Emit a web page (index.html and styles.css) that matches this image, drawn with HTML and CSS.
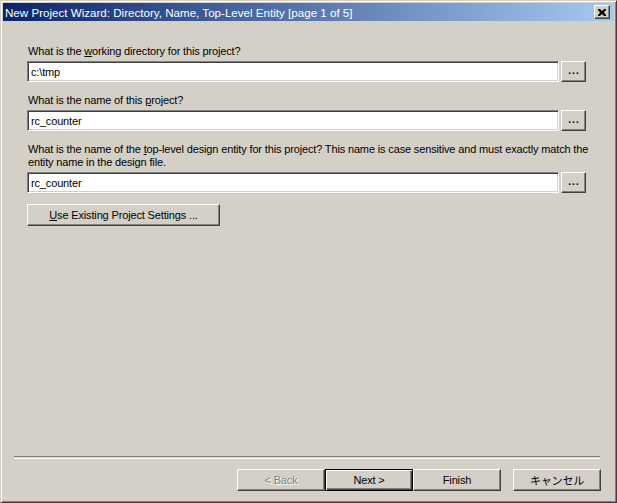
FILE: index.html
```html
<!DOCTYPE html>
<html>
<head>
<meta charset="utf-8">
<link rel="stylesheet" href="styles.css">
</head>
<body>
<div class="window">
  <div class="titlebar">
    <span class="title">New Project Wizard: Directory, Name, Top-Level Entity [page 1 of 5]</span>
    <span class="close"><svg width="8" height="7" viewBox="0 0 8 7"><path d="M0 0h2l2 2 2-2h2v1l-2 2.5 2 2.5v1h-2l-2-2-2 2h-2v-1l2-2.5-2-2.5z" fill="#000"/></svg></span>
  </div>
  <div class="body">
    <div class="content">
      <div class="field">
        <div class="label">What is the <u>w</u>orking directory for this project?</div>
        <div class="row">
          <div class="input">c:\tmp</div>
          <div class="btn browse">...</div>
        </div>
      </div>
      <div class="field">
        <div class="label">What is the name of this <u>p</u>roject?</div>
        <div class="row">
          <div class="input">rc_counter</div>
          <div class="btn browse">...</div>
        </div>
      </div>
      <div class="field">
        <div class="label wide">What is the name of the <u>t</u>op-level design entity for this project? This name is case sensitive and must exactly match the entity name in the design file.</div>
        <div class="row">
          <div class="input">rc_counter</div>
          <div class="btn browse">...</div>
        </div>
      </div>
      <div class="btn existing"><span><u>U</u>se Existing Project Settings ...</span></div>
    </div>
    <div class="separator"></div>
    <div class="footer">
      <div class="btn nav disabled">&lt; Back</div>
      <div class="btn nav default">Next &gt;</div>
      <div class="btn nav">Finish</div>
      <div class="btn nav cancel">キャンセル</div>
    </div>
  </div>
</div>
</body>
</html>
```
FILE: styles.css
```css
html, body {
  margin: 0;
  padding: 0;
  background: #d4d0c8;
}
body {
  width: 617px;
  height: 503px;
  overflow: hidden;
  font-family: "Liberation Sans", "Noto Sans CJK JP", sans-serif;
  font-size: 11px;
  letter-spacing: -0.15px;
  color: #000;
}
.window {
  box-sizing: border-box;
  width: 617px;
  height: 503px;
  background: #d4d0c8;
  border-top: 1px solid #d4d0c8;
  border-left: 1px solid #d4d0c8;
  border-right: 1px solid #404040;
  border-bottom: 1px solid #404040;
  box-shadow: inset 1px 1px 0 #fff, inset -1px -1px 0 #808080;
  padding: 2px;
  display: flex;
  flex-direction: column;
}
.titlebar {
  height: 18px;
  display: flex;
  align-items: center;
  justify-content: space-between;
  background: linear-gradient(to right, #0a246a, #a6caf0);
  color: #fff;
  padding: 0 4px 0 2px;
}
.title {
  font-size: 11.6px;
  letter-spacing: 0;
  white-space: nowrap;
}
.close {
  box-sizing: border-box;
  width: 16px;
  height: 14px;
  background: #d4d0c8;
  border-top: 1px solid #fff;
  border-left: 1px solid #fff;
  border-right: 1px solid #404040;
  border-bottom: 1px solid #404040;
  box-shadow: inset -1px -1px 0 #808080;
  display: flex;
  align-items: center;
  justify-content: center;
  padding-right: 1px;
}
.body {
  flex: 1;
  display: flex;
  flex-direction: column;
}
.content {
  flex: 1;
  padding: 24px 28px 0 24px;
  display: flex;
  flex-direction: column;
}
.field {
  display: flex;
  flex-direction: column;
  margin-bottom: 12px;
}
.field:nth-child(3) {
  margin-bottom: 11px;
}
.label {
  padding-left: 1px;
  line-height: 13px;
  margin-bottom: 3px;
}
.label.wide {
  margin-right: -6px;
}
.row {
  display: flex;
  align-items: stretch;
  gap: 2px;
}
.input {
  box-sizing: border-box;
  flex: 1;
  height: 21px;
  background: #fff;
  border-top: 1px solid #808080;
  border-left: 1px solid #808080;
  border-right: 1px solid #fff;
  border-bottom: 1px solid #fff;
  box-shadow: inset 1px 1px 0 #404040, inset -1px -1px 0 #d4d0c8;
  padding: 3px 3px 0 3px;
  line-height: 14px;
}
.btn {
  box-sizing: border-box;
  background: #d4d0c8;
  border-top: 1px solid #fff;
  border-left: 1px solid #fff;
  border-right: 1px solid #404040;
  border-bottom: 1px solid #404040;
  box-shadow: inset -1px -1px 0 #808080;
  display: flex;
  align-items: center;
  justify-content: center;
}
.browse {
  width: 25px;
  height: 21px;
  letter-spacing: 1px;
  padding-bottom: 3px;
  padding-left: 1px;
  font-weight: bold;
  font-size: 10px;
}
.existing {
  width: 193px;
  height: 22px;
}
.separator {
  margin: 0 14px 0 11px;
  height: 1px;
  border-top: 1px solid #808080;
  border-bottom: 1px solid #fff;
}
.footer {
  display: flex;
  justify-content: flex-end;
  padding: 10px 13px 9px 0;
}
.nav {
  width: 88px;
  height: 22px;
}
.default {
  border: 1px solid #000;
  box-shadow: inset 1px 1px 0 #fff, inset -1px -1px 0 #404040, inset -2px -2px 0 #808080;
}
.disabled {
  color: #808080;
  text-shadow: 1px 1px 0 #fff;
}
.cancel {
  margin-left: 12px;
  font-size: 11px;
}
u {
  text-decoration: underline;
  text-underline-offset: 1px;
}
```
